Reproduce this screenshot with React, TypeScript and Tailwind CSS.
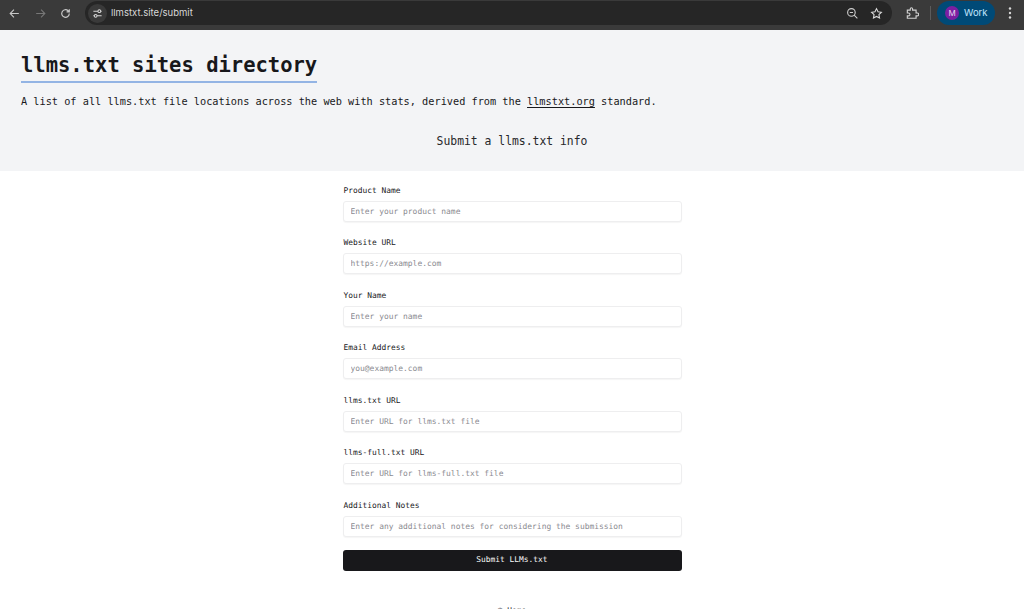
import React from 'react';

const mono = "font-['DejaVu_Sans_Mono','Liberation_Mono',monospace]";

const fields = [
  { label: 'Product Name', placeholder: 'Enter your product name' },
  { label: 'Website URL', placeholder: 'https://example.com' },
  { label: 'Your Name', placeholder: 'Enter your name' },
  { label: 'Email Address', placeholder: 'you@example.com' },
  { label: 'llms.txt URL', placeholder: 'Enter URL for llms.txt file' },
  { label: 'llms-full.txt URL', placeholder: 'Enter URL for llms-full.txt file' },
  { label: 'Additional Notes', placeholder: 'Enter any additional notes for considering the submission' },
];

const BrowserBar: React.FC = () => (
  <div className="flex h-[30px] items-center bg-[#3a3a3a] pb-[4px] text-[#d8d8d8]">
    <div className="ml-[8px] flex items-center gap-[12.500px]">
      <svg width="13" height="13" viewBox="0 0 24 24" fill="none" stroke="#c8c8c8" strokeWidth="2">
        <path d="M20 12H5M11 5l-7 7 7 7" />
      </svg>
      <svg width="13" height="13" viewBox="0 0 24 24" fill="none" stroke="#777" strokeWidth="2">
        <path d="M4 12h15M13 5l7 7-7 7" />
      </svg>
      <svg width="13" height="13" viewBox="0 0 24 24" fill="none" stroke="#c8c8c8" strokeWidth="2.2">
        <path d="M19 12a7 7 0 1 1-2.200-5.100L19 9M19 4v5h-5" />
      </svg>
    </div>
    <div className="ml-[13px] flex h-[24px] w-[807px] items-center rounded-full bg-[#262626] pl-[3px] pr-[9.500px]">
      <div className="flex h-[19px] w-[19px] items-center justify-center rounded-full bg-[#3a3a3a]">
        <svg width="11" height="11" viewBox="0 0 24 24" fill="none" stroke="#d8d8d8" strokeWidth="2.2">
          <path d="M3 7h10M19 7h2M3 17h2M11 17h10" />
          <circle cx="16" cy="7" r="3" />
          <circle cx="8" cy="17" r="3" />
        </svg>
      </div>
      <span className="ml-[4px] font-['Inter',sans-serif] text-[9.500px] text-[#d8d8d8]">llmstxt.site/submit</span>
      <div className="ml-auto flex items-center gap-[11px]">
        <svg width="13" height="13" viewBox="0 0 24 24" fill="none" stroke="#cfcfcf" strokeWidth="2">
          <circle cx="10" cy="10" r="7" />
          <path d="M15 15l6 6M7 10h6" />
        </svg>
        <svg width="13" height="13" viewBox="0 0 24 24" fill="none" stroke="#dcdcdc" strokeWidth="2">
          <path d="M12 3l2.800 5.800 6.200.9-4.500 4.400 1.100 6.300-5.600-3-5.600 3 1.100-6.300L3 9.700l6.200-.9z" />
        </svg>
      </div>
    </div>
    <svg className="ml-[13px]" width="14" height="14" viewBox="0 0 24 24" fill="none" stroke="#cfcfcf" strokeWidth="2">
      <path d="M4 7h5V5a2 2 0 0 1 4 0v2h6v5h2a2.500 2.500 0 0 1 0 5h-2v4H4v-4h2a2.500 2.500 0 0 0 0-5H4z" />
    </svg>
    <div className="ml-[11px] h-[14px] w-px bg-[#5c5c5c]" />
    <div className="ml-[6px] flex h-[24px] w-[58px] items-center rounded-full bg-[#004a77] pl-[8px]">
      <div className="flex h-[14px] w-[14px] items-center justify-center rounded-full bg-[#7b1fa2] font-['Inter',sans-serif] text-[8px] text-[#e8d8f0]">
        M
      </div>
      <span className="ml-[5px] font-['Inter',sans-serif] text-[9.500px] text-[#c2e7ff]">Work</span>
    </div>
    <svg className="ml-[13px]" width="4" height="14" viewBox="0 0 4 14" fill="#d8d8d8">
      <circle cx="2" cy="2.500" r="1.200" />
      <circle cx="2" cy="7" r="1.200" />
      <circle cx="2" cy="11.500" r="1.200" />
    </svg>
  </div>
);

export default function App() {
  return (
    <div className={`h-[609px] w-full overflow-hidden bg-white text-[#18181b] ${mono}`}>
      <BrowserBar />

      <header className="h-[141px] bg-[#f3f4f6] pl-[21px] pt-[22px]">
        <h1 className="w-fit border-b-2 border-[#93b4e4] pb-[3px] text-[20.500px] font-bold leading-[26px]">
          llms.txt sites directory
        </h1>
        <p className="mt-[10px] text-[10.250px] leading-[16px]">
          A list of all llms.txt file locations across the web with stats, derived from the{' '}
          <a className="underline underline-offset-2" href="#">
            llmstxt.org
          </a>{' '}
          standard.
        </p>
        <h2 className="mt-[23px] pr-[21px] text-center text-[11.400px] leading-[18px] text-[#27272a]">
          Submit a llms.txt info
        </h2>
      </header>

      <main className="mx-auto w-[339px] pt-[12.800px]">
        <form className="flex flex-col gap-[14.500px]">
          {fields.map((f) => (
            <div key={f.label}>
              <label className="mb-[4px] block pl-px text-[7.900px] font-medium leading-[13px] text-[#18181b]">{f.label}</label>
              <input
                className="block h-[21px] w-full rounded-[3px] border border-[#eeeeef] bg-white px-[7px] text-[7.950px] shadow-[0_1px_1px_rgba(0,0,0,0.04)] outline-none placeholder:text-[#8a8a90]"
                placeholder={f.placeholder}
              />
            </div>
          ))}
          <button
            type="button"
            className="-mt-[1.500px] h-[21px] w-full rounded-[3px] bg-[#18181b] text-[7.900px] text-[#fafafa]"
          >
            Submit LLMs.txt
          </button>
        </form>
        <p className="mt-[33px] text-center text-[7.900px] leading-[13px] text-[#18181b]">© Home</p>
      </main>
    </div>
  );
}
